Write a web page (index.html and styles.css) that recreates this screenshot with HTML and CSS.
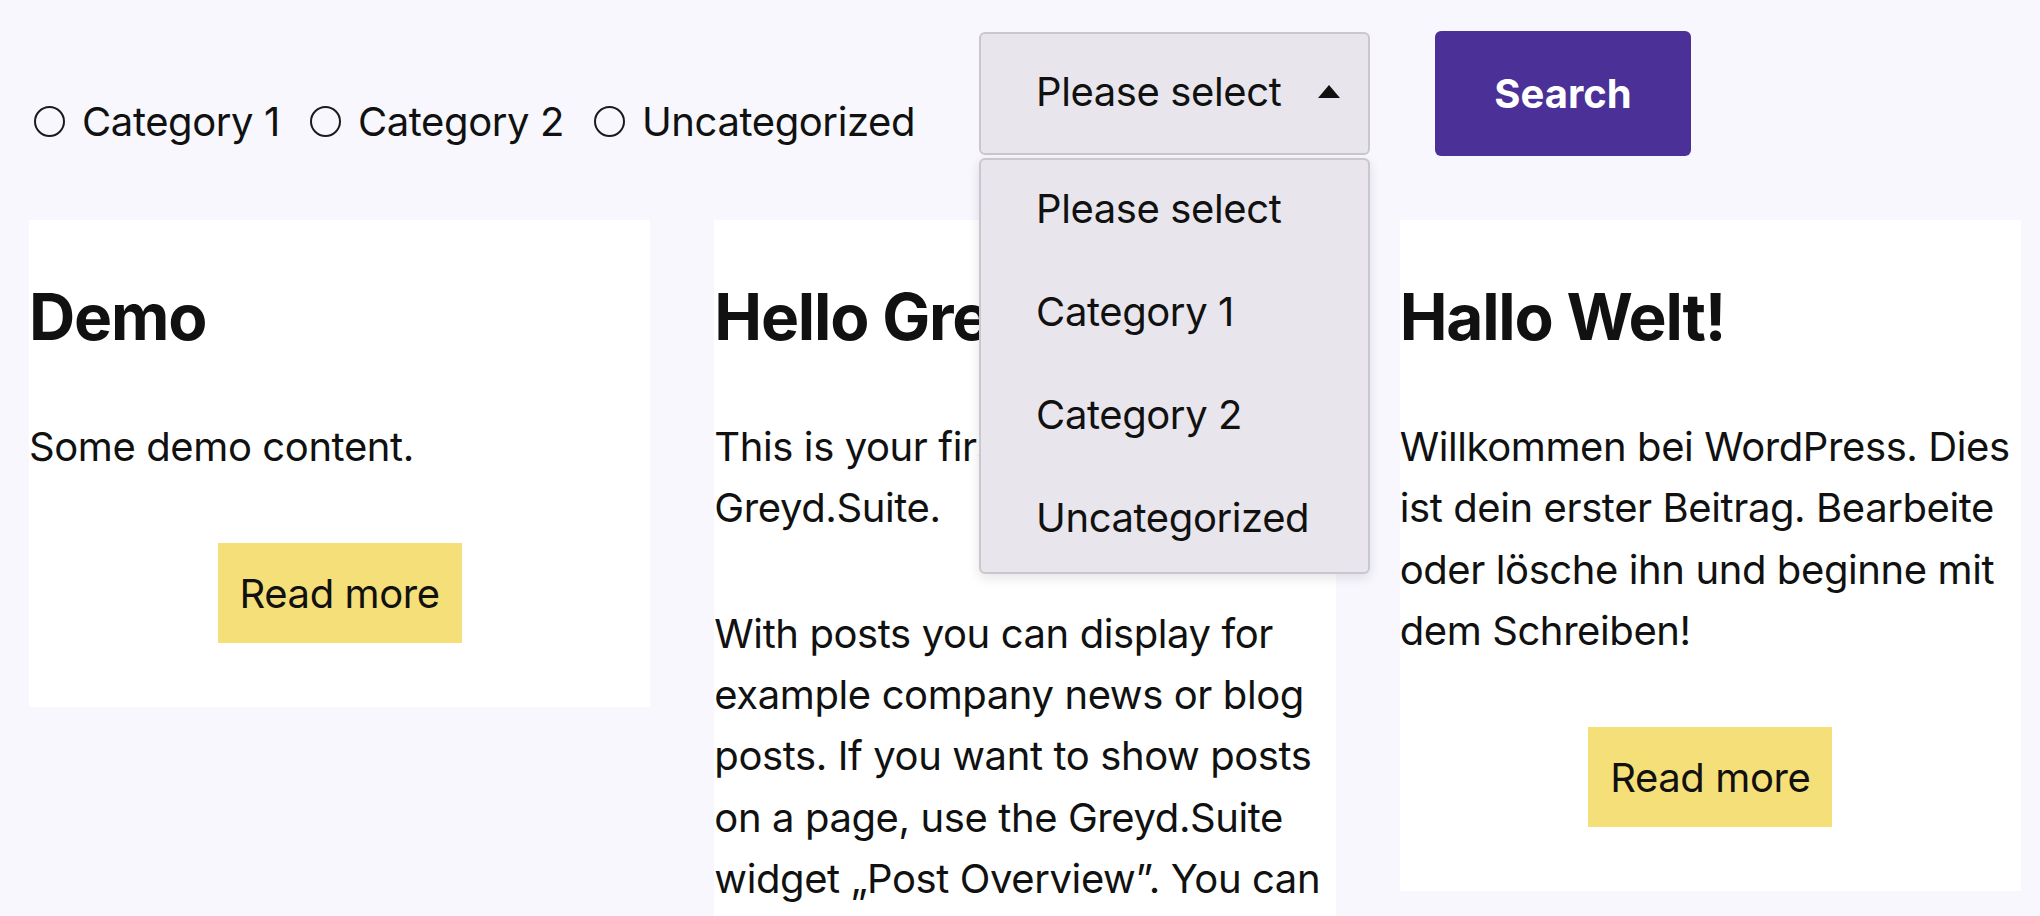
FILE: index.html
```html
<!DOCTYPE html>
<html lang="en">

<head>
  <meta charset="UTF-8">
  <meta name="viewport" content="width=device-width, initial-scale=1.0">
  <link rel="stylesheet" href="styles.css">
  <title>Post Overview</title>
</head>
<body>
  <div class="page">
    <form class="filter">
      <div class="cats">
        <label class="cat"><input type="radio" name="category" value="1">Category 1</label>
        <label class="cat"><input type="radio" name="category" value="2">Category 2</label>
        <label class="cat"><input type="radio" name="category" value="0">Uncategorized</label>
      </div>
      <div class="select">
        <div class="select-box">Please select <span class="arrow"></span></div>
        <ul class="options">
          <li>Please select</li>
          <li>Category 1</li>
          <li>Category 2</li>
          <li>Uncategorized</li>
        </ul>
      </div>
      <button type="button" class="search">Search</button>
    </form>

    <div class="posts">
      <article class="post">
        <h2>Demo</h2>
        <p>Some demo content.</p>
        <div class="more"><a href="#">Read more</a></div>
      </article>
      <article class="post">
        <h2>Hello Greyd.Suite!</h2>
        <p>This is your first post with Greyd.Suite.</p>
        <p>With posts you can display for example company news or blog posts. If you want to show posts on a page, use the Greyd.Suite widget „Post Overview”. You can find more settings in the documentation.</p>
        <div class="more"><a href="#">Read more</a></div>
      </article>
      <article class="post">
        <h2>Hallo Welt!</h2>
        <p>Willkommen bei WordPress. Dies ist dein erster Beitrag. Bearbeite oder lösche ihn und beginne mit dem Schreiben!</p>
        <div class="more"><a href="#">Read more</a></div>
      </article>
    </div>
  </div>
</body>
</html>
```

FILE: styles.css
```css
* {
  margin: 0;
  padding: 0;
  box-sizing: border-box
}
html {
  scrollbar-width: none
}
body {
  background: #f7f7fd;
  color: #101110;
  font-family: Inter, "Noto Sans", sans-serif;
  font-size: 40px;
  line-height: 61.4px;
  letter-spacing: -0.4px
}
.page {
  padding: 31px 19px 0 29px
}

/* filter bar */
.filter {
  display: flex;
  align-items: center;
  margin-bottom: 64px
}
.cats {
  display: flex;
  align-self: flex-end;
  margin-bottom: 4px
}
.cat {
  display: flex;
  align-items: center;
  margin-right: 25px
}
.cat:last-child {
  margin-right: 0
}
.cat input {
  appearance: none;
  width: 31px;
  height: 31px;
  border: 2px solid #1b1b1b;
  border-radius: 50%;
  margin: 0 17px 0 5px;
  background: transparent
}
.select {
  position: relative;
  margin-left: 64px
}
.select-box {
  display: flex;
  align-items: center;
  width: 391px;
  height: 123px;
  padding: 0 28px 4px 55px;
  background: #e8e5ec;
  border: 2px solid #cbc7cf;
  border-radius: 6px
}
.arrow {
  margin-left: auto;
  width: 0;
  height: 0;
  border-left: 11px solid transparent;
  border-right: 11px solid transparent;
  border-bottom: 13px solid #111
}
.options {
  position: absolute;
  top: calc(100% + 3px);
  left: 0;
  width: 391px;
  list-style: none;
  background: #e8e5ec;
  border: 2px solid #cbc7cf;
  border-radius: 6px;
  box-shadow: 0 4px 12px rgba(40, 30, 60, 0.12);
  z-index: 5
}
.options li {
  padding: 18px 55px 23.6px
}
.search {
  width: 256px;
  height: 125px;
  margin-left: 65px;
  background: #4b3197;
  color: #fff;
  border: none;
  border-radius: 6px;
  font-family: inherit;
  font-size: 40px;
  font-weight: 700
}

/* posts */
.posts {
  display: grid;
  grid-template-columns: repeat(3, 1fr);
  column-gap: 64px;
  align-items: start
}
.post {
  background: #fff;
  padding: 59px 0 64px
}
.post h2 {
  font-size: 64px;
  line-height: 76.8px;
  font-weight: 700;
  letter-spacing: -1.2px;
  margin-bottom: 60px
}
.post p + p {
  margin-top: 64px
}
.more {
  text-align: center;
  margin-top: 66px
}
.more a {
  display: inline-block;
  padding: 19.3px 22px;
  background: #f5df79;
  color: #111;
  text-decoration: none
}
```
